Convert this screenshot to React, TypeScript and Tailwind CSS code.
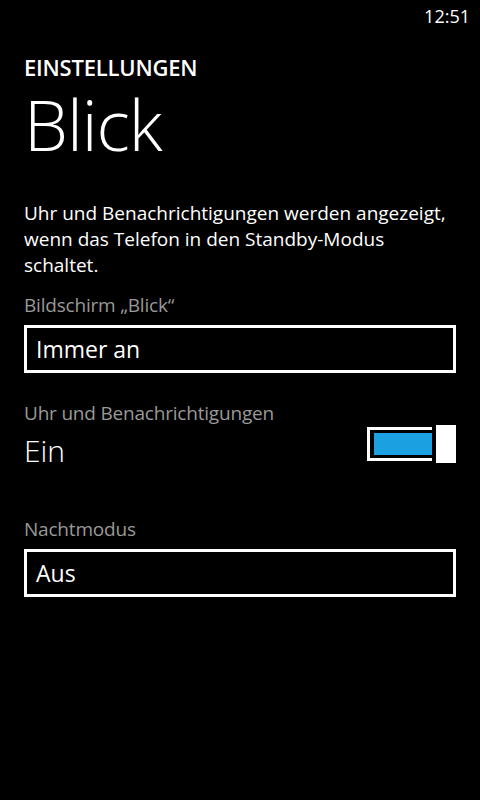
export default function App() {
  return (
    <div className="w-[480px] h-[800px] bg-black text-white overflow-hidden" style={{ fontFamily: '"Open Sans", "Noto Sans", sans-serif' }}>
      <div className="h-[32px] flex justify-end items-center pr-[10px]">
        <span className="text-[18px] leading-none">12:51</span>
      </div>
      <div className="px-[24px]">
        <div className="mt-[22px] text-[22px] font-semibold leading-[26px] tracking-[-0.2px]">EINSTELLUNGEN</div>
        <div className="mt-[4px] text-[70px] font-light leading-[80px] tracking-[-1px]">Blick</div>
        <p className="mt-[36px] w-[425px] text-[19px] leading-[26px]">
          Uhr und Benachrichtigungen werden angezeigt, wenn das Telefon in den Standby-Modus schaltet.
        </p>
        <div className="mt-[15px] text-[19px] leading-[24px] text-[#999999] tracking-[-0.2px]">Bildschirm „Blick“</div>
        <div className="mt-[8px] h-[48px] border-[3px] border-white flex items-center px-[9px] text-[23px]">Immer an</div>
        <div className="mt-[28px] text-[19px] leading-[24px] text-[#999999] tracking-[-0.2px]">Uhr und Benachrichtigungen</div>
        <div className="flex items-start justify-between">
          <span className="pt-[6px] text-[30px] font-light leading-[40px]">Ein</span>
          <div className="flex items-center">
            <div className="w-[65px] h-[34px] border-[3px] border-r-0 border-white pl-[4px] py-[3px]">
              <div className="h-full bg-[#1ba1e2]" />
            </div>
            <div className="ml-[4px] w-[20px] h-[38px] bg-white" />
          </div>
        </div>
        <div className="mt-[46px] text-[19px] leading-[24px] text-[#999999] tracking-[-0.2px]">Nachtmodus</div>
        <div className="mt-[8px] h-[48px] border-[3px] border-white flex items-center px-[9px] text-[23px]">Aus</div>
      </div>
    </div>
  );
}
